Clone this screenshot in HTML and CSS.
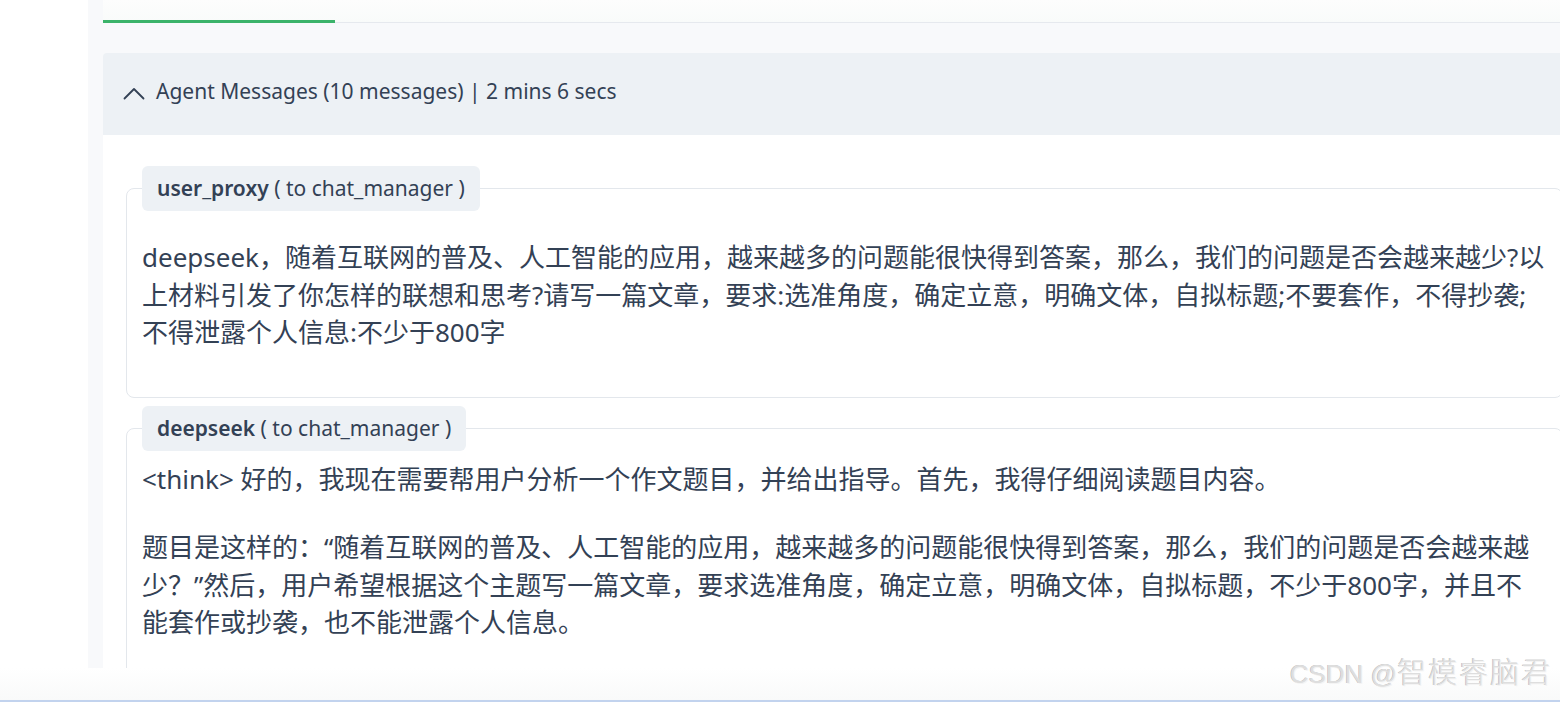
FILE: index.html
```html
<!DOCTYPE html>
<html lang="zh-CN">
<head>
<meta charset="utf-8">
<title>Agent Messages</title>
<link rel="stylesheet" href="styles.css">
</head>
<body>
<div class="page">
  <div class="gutter"></div>
  <main class="panel">
    <div class="tabs"><span class="tab-indicator"></span></div>
    <section class="agent-section">
      <header class="section-header">
        <svg class="chevron" width="22" height="22" viewBox="0 0 22 22" aria-hidden="true">
          <path d="M1.5 16.5 L11 7 L20.5 16.5" fill="none" stroke="#334155" stroke-width="1.8" stroke-linecap="round" stroke-linejoin="round"/>
        </svg>
        <span class="section-title">Agent Messages (10 messages) | 2 mins 6 secs</span>
      </header>
      <div class="section-body">
        <fieldset class="msg">
          <legend class="msg-label"><b>user_proxy</b> ( to chat_manager )</legend>
          <div class="msg-body msg-body--spaced">
            <p>deepseek，随着互联网的普及、人工智能的应用，越来越多的问题能很快得到答案，那么，我们的问题是否会越来越少?以上材料引发了你怎样的联想和思考?请写一篇文章，要求:选准角度，确定立意，明确文体，自拟标题;不要套作，不得抄袭;不得泄露个人信息:不少于800字</p>
          </div>
        </fieldset>
        <fieldset class="msg">
          <legend class="msg-label"><b>deepseek</b> ( to chat_manager )</legend>
          <div class="msg-body">
            <p>&lt;think&gt; 好的，我现在需要帮用户分析一个作文题目，并给出指导。首先，我得仔细阅读题目内容。</p>
            <p>题目是这样的：“随着互联网的普及、人工智能的应用，越来越多的问题能很快得到答案，那么，我们的问题是否会越来越少？”然后，用户希望根据这个主题写一篇文章，要求选准角度，确定立意，明确文体，自拟标题，不少于800字，并且不能套作或抄袭，也不能泄露个人信息。</p>
          </div>
        </fieldset>
      </div>
    </section>
  </main>
</div>
<div class="bottom-strip"></div>
<div class="watermark">CSDN @<span class="wm-cjk">智模睿脑君</span></div>
</body>
</html>
```
FILE: styles.css
```css
html, body {
  margin: 0;
  padding: 0;
}
body {
  width: 1560px;
  height: 702px;
  overflow: hidden;
  background: #ffffff;
  color: #334155;
  font-family: "Noto Sans", "Open Sans", "Noto Sans CJK SC", sans-serif;
  position: relative;
}
.page {
  display: flex;
  height: 668px;
  overflow: hidden;
}
.gutter {
  width: 88px;
  flex: none;
  background: #ffffff;
}
.panel {
  flex: none;
  width: 1510px;
  background: #f8f9fb;
  padding-left: 15px;
}
.tabs {
  height: 22px;
  border-bottom: 1px solid #e6e9ee;
  background: linear-gradient(#fdfdfd, #f9fbfa);
  display: flex;
  align-items: flex-end;
}
.tab-indicator {
  display: block;
  width: 232px;
  height: 3px;
  margin-bottom: -1px;
  background: #3bb36a;
}
.agent-section {
  margin-top: 30px;
}
.section-header {
  height: 82px;
  box-sizing: border-box;
  padding: 0 0 6px 20px;
  background: #edf1f5;
  border-radius: 4px 0 0 0;
  display: flex;
  align-items: center;
  gap: 11px;
  font-size: 21px;
}
.chevron {
  display: block;
  flex: none;
  margin-top: 4px;
}
.section-title {
  line-height: 1;
  white-space: nowrap;
}
.section-body {
  background: #ffffff;
  padding: 31px 0 40px 23px;
}
.msg {
  margin: 0 0 8px 0;
  padding: 0 15px 14px 15px;
  border: 1px solid #e3e7ec;
  border-radius: 8px;
  width: 1405px;
  min-inline-size: 0;
}
.msg-label {
  background: #edf1f5;
  border-radius: 6px;
  padding: 0 15px;
  height: 45px;
  line-height: 45px;
  font-size: 21px;
  box-sizing: border-box;
}
.msg-label b {
  font-weight: 600;
}
.msg-body {
  padding-top: 10px;
  font-size: 26px;
  line-height: 37.5px;
  font-family: "Noto Sans", "Noto Sans CJK SC", sans-serif;
}
.msg-body--spaced {
  padding-top: 28px;
}
.msg-body p {
  margin: 0 0 31px 0;
}
.bottom-strip {
  height: 34px;
  background: linear-gradient(#ffffff, #f9fafa);
  border-bottom: 2px solid #c2d3ee;
  box-sizing: border-box;
}
.watermark {
  position: absolute;
  right: 8px;
  bottom: 11px;
  font-family: "Liberation Sans", "Noto Sans CJK SC", sans-serif;
  font-size: 26px;
  color: #dedede;
  text-shadow: 1px 1px 0 #f4f4f4, -0.5px -0.5px 0 #b5b5b5;
  white-space: nowrap;
}
.wm-cjk {
  font-family: "Noto Sans CJK SC", sans-serif;
  font-weight: 300;
  font-size: 29px;
  letter-spacing: 2px;
}
```
